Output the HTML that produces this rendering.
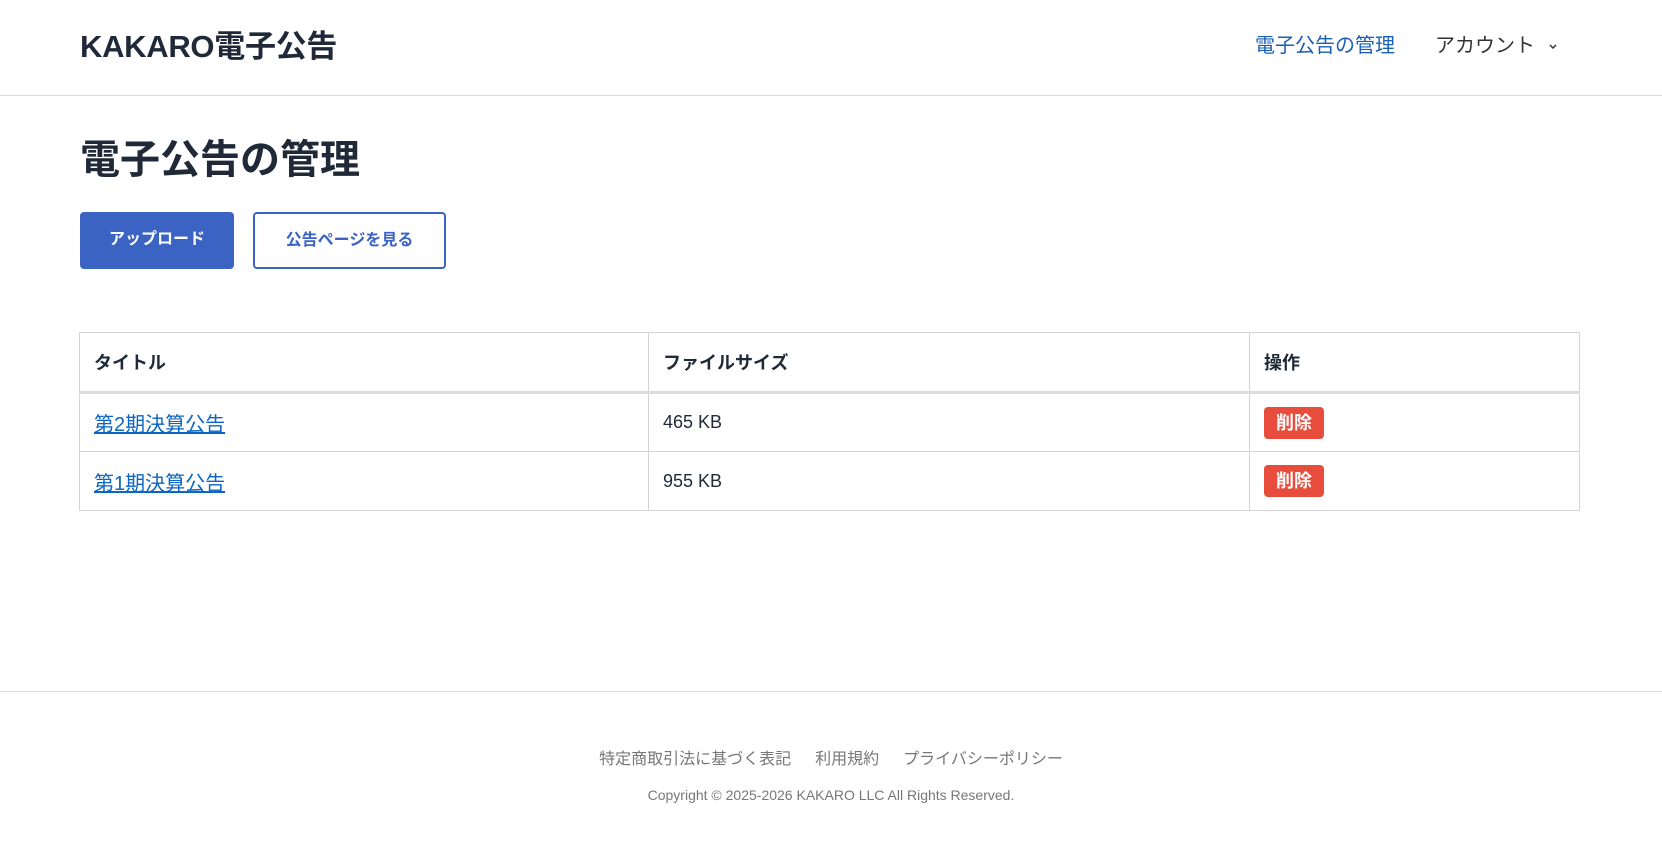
<!DOCTYPE html>
<html><head><meta charset="utf-8"><style>
*{box-sizing:border-box;margin:0;padding:0}
body{width:1662px;height:846px;background:#fff;font-family:"Liberation Sans","Noto Sans CJK JP",sans-serif;color:#1f2937;position:relative;overflow:hidden}
.hd{position:absolute;left:0;top:0;width:1662px;height:96px;border-bottom:1px solid #d9d9de}
.logo{position:absolute;left:80px;top:27px;font-size:31px;font-weight:bold;color:#1f2937;line-height:40px;letter-spacing:-0.3px}
.nav1{position:absolute;left:1255px;top:33px;font-size:20px;color:#1a5fb4;line-height:26px}
.nav2{position:absolute;left:1435px;top:33px;font-size:20px;color:#333;line-height:26px}
.chev{position:absolute;left:1548px;top:43px}
h1{position:absolute;left:80px;top:134px;font-size:40px;line-height:52px;font-weight:bold;color:#1f2937}
.b1{position:absolute;left:80px;top:212px;width:154px;height:57px;background:#3b63c4;border-radius:4px;color:#fff;font-size:16px;font-weight:bold;display:flex;align-items:center;justify-content:center;padding-bottom:8px}
.b2{position:absolute;left:253px;top:212px;width:193px;height:57px;border:2px solid #3b63c4;border-radius:4px;color:#3b63c4;font-size:16px;font-weight:bold;display:flex;align-items:center;justify-content:center;padding-bottom:6px}
table{position:absolute;left:79px;top:332px;width:1501px;border-collapse:collapse;font-size:18px}
td,th{border:1px solid #d4d4d8;padding:0 14px;text-align:left;vertical-align:middle}
th{height:60px;font-weight:bold;border-bottom:3px solid #dcdcdc}
td{height:59px}
a{color:#0b66c3;text-decoration:underline;font-size:20px}
.del{display:inline-block;background:#e74c3c;color:#fff;border-radius:4px;padding:0 12px;height:32px;line-height:32px;font-size:18px;font-weight:bold}
.ft{position:absolute;left:0;top:691px;width:1662px;border-top:1px solid #d9d9de}
.fl{position:absolute;left:0;top:745px;width:1662px;text-align:center;font-size:16px;color:#777}
.fl span{margin:0 12px}
.cp{position:absolute;left:0;top:787px;width:1662px;text-align:center;font-size:14px;color:#777}
</style></head><body>
<div class="hd">
<div class="logo">KAKARO電子公告</div>
<div class="nav1">電子公告の管理</div>
<div class="nav2">アカウント</div>
<svg class="chev" width="10" height="8" viewBox="0 0 10 8"><path d="M2 2l3 3 3-3" fill="none" stroke="#333" stroke-width="1.5"/></svg>
</div>
<h1>電子公告の管理</h1>
<div class="b1">アップロード</div>
<div class="b2">公告ページを見る</div>
<table>
<tr><th style="width:569px">タイトル</th><th style="width:601px">ファイルサイズ</th><th>操作</th></tr>
<tr><td><a>第2期決算公告</a></td><td>465 KB</td><td><span class="del">削除</span></td></tr>
<tr><td><a>第1期決算公告</a></td><td>955 KB</td><td><span class="del">削除</span></td></tr>
</table>
<div class="ft"></div>
<div class="fl"><span>特定商取引法に基づく表記</span><span>利用規約</span><span>プライバシーポリシー</span></div>
<div class="cp">Copyright © 2025-2026 KAKARO LLC All Rights Reserved.</div>
</body></html>
